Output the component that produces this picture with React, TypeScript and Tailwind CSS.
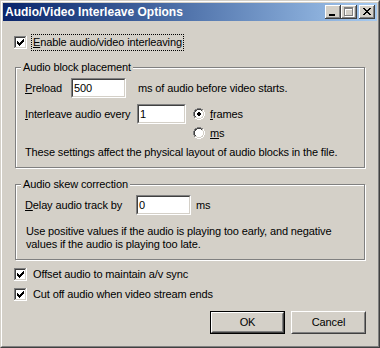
import React from "react";

const F = { fontFamily: '"Liberation Sans", Arial, sans-serif' };

function Check({ checked = true }: { checked?: boolean }) {
  const cols: [number, number][] = [
    [3, 5], [4, 6], [5, 7], [6, 6], [7, 5], [8, 4], [9, 3],
  ];
  return (
    <svg width={13} height={13} shapeRendering="crispEdges" className="shrink-0 block">
      <rect x={0} y={0} width={13} height={13} fill="#fff" />
      <rect x={0} y={0} width={12} height={1} fill="#808080" />
      <rect x={0} y={0} width={1} height={12} fill="#808080" />
      <rect x={1} y={1} width={10} height={1} fill="#404040" />
      <rect x={1} y={1} width={1} height={10} fill="#404040" />
      <rect x={1} y={11} width={11} height={1} fill="#d4d0c8" />
      <rect x={11} y={1} width={1} height={11} fill="#d4d0c8" />
      {checked && cols.map(([x, y]) => <rect key={x} x={x} y={y} width={1} height={3} fill="#000" />)}
    </svg>
  );
}

function Radio({ checked = false }: { checked?: boolean }) {
  const outer: [number, number[]][] = [
    [0, [4, 5, 6, 7]], [1, [2, 3, 8, 9]], [2, [1, 10]], [3, [1, 10]],
    [4, [0, 11]], [5, [0, 11]], [6, [0, 11]], [7, [0, 11]],
    [8, [1, 10]], [9, [1, 10]], [10, [2, 3, 8, 9]], [11, [4, 5, 6, 7]],
  ];
  const inner: [number, number[]][] = [
    [1, [4, 5, 6, 7]], [2, [2, 3, 8, 9]], [3, [2, 9]],
    [4, [1, 10]], [5, [1, 10]], [6, [1, 10]], [7, [1, 10]],
    [8, [2, 9]], [9, [2, 3, 8, 9]], [10, [4, 5, 6, 7]],
  ];
  const fill: [number, number, number][] = [
    [2, 4, 4], [3, 3, 6], [4, 2, 8], [5, 2, 8], [6, 2, 8], [7, 2, 8], [8, 3, 6], [9, 4, 4],
  ];
  const rects: React.ReactNode[] = [];
  fill.forEach(([y, x, w]) => rects.push(<rect key={`f${y}`} x={x} y={y} width={w} height={1} fill="#fff" />));
  outer.forEach(([y, xs]) =>
    xs.forEach((x) =>
      rects.push(<rect key={`o${x}-${y}`} x={x} y={y} width={1} height={1} fill={x + y <= 10 ? "#808080" : "#fff"} />)
    )
  );
  inner.forEach(([y, xs]) =>
    xs.forEach((x) =>
      rects.push(<rect key={`i${x}-${y}`} x={x} y={y} width={1} height={1} fill={x + y <= 10 ? "#404040" : "#d4d0c8"} />)
    )
  );
  if (checked) {
    rects.push(<rect key="d1" x={5} y={4} width={2} height={1} fill="#000" />);
    rects.push(<rect key="d2" x={4} y={5} width={4} height={2} fill="#000" />);
    rects.push(<rect key="d3" x={5} y={7} width={2} height={1} fill="#000" />);
  }
  return (
    <svg width={12} height={12} shapeRendering="crispEdges" className="shrink-0 block">
      {rects}
    </svg>
  );
}

function CaptionButton({ kind }: { kind: "min" | "max" | "close" }) {
  const xs = [
    "M4 3h2v1h-2z", "M10 3h2v1h-2z", "M5 4h2v1h-2z", "M9 4h2v1h-2z", "M6 5h4v1h-4z", "M7 6h2v1h-2z",
    "M6 7h4v1h-4z", "M5 8h2v1h-2z", "M9 8h2v1h-2z", "M4 9h2v1h-2z", "M10 9h2v1h-2z",
  ];
  return (
    <svg width={16} height={14} shapeRendering="crispEdges" className="block">
      <rect x={0} y={0} width={16} height={14} fill="#404040" />
      <rect x={0} y={0} width={15} height={13} fill="#fff" />
      <rect x={1} y={1} width={14} height={12} fill="#808080" />
      <rect x={1} y={1} width={13} height={11} fill="#d4d0c8" />
      <rect x={2} y={2} width={12} height={10} fill="#d4d0c8" />
      {kind === "min" && <rect x={4} y={9} width={6} height={2} fill="#000" />}
      {kind === "max" && (
        <g>
          <path d="M4 3h9v9h-9z M5 5v6h7v-6z" fill="#fff" fillRule="evenodd" />
          <path d="M3 2h9v9h-9z M4 4v6h7v-6z" fill="#808080" fillRule="evenodd" />
        </g>
      )}
      {kind === "close" && <path d={xs.join(" ")} fill="#000" />}
    </svg>
  );
}

function Edit({ w, value }: { w: string; value: string }) {
  return (
    <div className={`${w} h-[20px] shrink-0 border border-t-[#808080] border-l-[#808080] border-b-white border-r-white`}>
      <div className="h-full border border-t-[#404040] border-l-[#404040] border-b-[#d4d0c8] border-r-[#d4d0c8] bg-white pl-px flex items-center text-[11px] text-black leading-none">
        {value}
      </div>
    </div>
  );
}

function Group({ title, h, children }: { title: string; h: string; children: React.ReactNode }) {
  return (
    <div
      className={`relative ml-[12px] w-[350px] ${h} border border-[#808080] shadow-[1px_1px_0_#fff,inset_1px_1px_0_#fff]`}
    >
      <div className="absolute left-[5px] top-[-7px] px-[2px] bg-[#d4d0c8] text-[11px] leading-[13px]">{title}</div>
      {children}
    </div>
  );
}

function RaisedButton({ label, def }: { label: string; def?: boolean }) {
  const inner = (
    <div className="h-full border border-t-white border-l-white border-b-[#404040] border-r-[#404040]">
      <div className="h-full border border-t-[#d4d0c8] border-l-[#d4d0c8] border-b-[#808080] border-r-[#808080] flex items-center justify-center text-[11px]">
        {label}
      </div>
    </div>
  );
  return def ? (
    <div className="w-[75px] h-[23px] border border-black">{inner}</div>
  ) : (
    <div className="w-[75px] h-[23px]">{inner}</div>
  );
}

export default function App() {
  return (
    <div
      style={F}
      className="w-[380px] h-[348px] bg-[#d4d0c8] text-black border border-t-[#d4d0c8] border-l-[#d4d0c8] border-b-[#404040] border-r-[#404040]"
    >
      <div className="h-full border border-t-white border-l-white border-b-[#808080] border-r-[#808080] p-px flex flex-col">
        {/* Title bar */}
        <div className="h-[18px] shrink-0 bg-gradient-to-r from-[#0a246a] to-[#a6caf0] flex items-start pl-[2px] pr-[2px] pt-[2px]">
          <div className="flex-1 text-white font-bold text-[12px] leading-[14px]">Audio/Video Interleave Options</div>
          <div className="flex">
            <CaptionButton kind="min" />
            <CaptionButton kind="max" />
            <div className="ml-[2px]">
              <CaptionButton kind="close" />
            </div>
          </div>
        </div>

        {/* Content */}
        <div className="flex flex-col text-[11px] tracking-[-0.13px]">
          <div className="mt-[13px] h-[17px] pl-[11px] flex items-center">
            <Check />
            <div className="ml-[4px] h-[17px] border border-dotted border-black px-px flex items-center leading-none">
              <span><u>E</u>nable audio/video interleaving</span>
            </div>
          </div>

          <div className="mt-[16px]">
            <Group title="Audio block placement" h="h-[101px]">
              <div className="pt-[10px] pl-[9px] flex flex-col">
                <div className="h-[20px] flex items-center">
                  <div className="w-[46px]"><u>P</u>reload</div>
                  <Edit w="w-[55px]" value="500" />
                  <div className="ml-[12px]">ms of audio before video starts.</div>
                </div>
                <div className="mt-[6px] flex items-start">
                  <div className="w-[112px] h-[20px] flex items-center"><u>I</u>nterleave audio every</div>
                  <Edit w="w-[49px]" value="1" />
                  <div className="ml-[7px] flex flex-col">
                    <div className="h-[20px] flex items-center">
                      <Radio checked />
                      <span className="ml-[5px]"><u>f</u>rames</span>
                    </div>
                    <div className="h-[18px] flex items-center">
                      <Radio />
                      <span className="ml-[5px]"><u>m</u>s</span>
                    </div>
                  </div>
                </div>
                <div className="mt-[4px] leading-[13px]">
                  These settings affect the physical layout of audio blocks in the file.
                </div>
              </div>
            </Group>
          </div>

          <div className="mt-[16px]">
            <Group title="Audio skew correction" h="h-[76px]">
              <div className="pt-[10px] pl-[9px] flex flex-col">
                <div className="h-[20px] flex items-center">
                  <div className="w-[111px]"><u>D</u>elay audio track by</div>
                  <Edit w="w-[55px]" value="0" />
                  <div className="ml-[5px]">ms</div>
                </div>
                <div className="mt-[10px] pl-px leading-[13px]">
                  Use positive values if the audio is playing too early, and negative
                  <br />
                  values if the audio is playing too late.
                </div>
              </div>
            </Group>
          </div>

          <div className="mt-[6px] h-[17px] pl-[11px] flex items-center">
            <Check />
            <span className="ml-[6px]">Offset audio to maintain a/v sync</span>
          </div>
          <div className="mt-[3px] h-[17px] pl-[11px] flex items-center">
            <Check />
            <span className="ml-[6px]">Cut off audio when video stream ends</span>
          </div>

          <div className="mt-[8px] flex justify-end gap-[6px] pr-[11px]">
            <RaisedButton label="OK" def />
            <RaisedButton label="Cancel" />
          </div>
        </div>
      </div>
    </div>
  );
}
